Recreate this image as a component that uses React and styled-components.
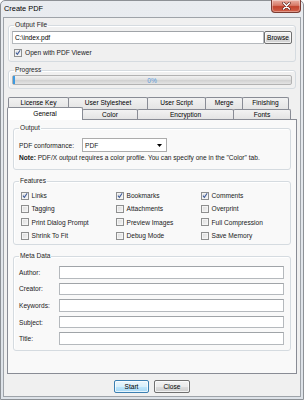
import React from "react";
import styled, { createGlobalStyle } from "styled-components";

const Global = createGlobalStyle`
  html, body { margin: 0; padding: 0; background: #ffffff; }
  body { font-family: "Liberation Sans", Arial, sans-serif; }
  * { box-sizing: border-box; }
`;

const Window = styled.div`
  width: 304px;
  height: 400px;
  display: flex;
  flex-direction: column;
  background: linear-gradient(#e9ecf0, #dde2e8);
  border: 1px solid #8d9196;
  border-radius: 5px 5px 0 0;
  font-family: "Liberation Sans", Arial, sans-serif;
  font-size: 6.6px;
  color: #1a1a1a;
`;

const TitleBar = styled.div`
  height: 16px;
  display: flex;
  align-items: flex-start;
  padding-left: 3px;
`;

const Title = styled.span`
  font-size: 7.4px;
  line-height: 15px;
  color: #000;
`;

const CloseBtn = styled.div`
  margin-left: auto;
  margin-right: 2px;
  margin-top: -1px;
  width: 30px;
  height: 13px;
  border: 1px solid #7a3c33;
  border-top: none;
  border-radius: 0 0 4px 4px;
  background: linear-gradient(#eab1a5 0%, #d77a68 45%, #c2432d 55%, #d2614a 100%);
  display: flex;
  align-items: center;
  justify-content: center;
  box-shadow: inset 0 0 0 1px rgba(255,255,255,0.35);
`;

const Client = styled.div`
  flex: 1;
  margin: 0 2px 2px 2px;
  border: 1px solid #9ea3a9;
  background: #f0f0f0;
  display: flex;
  flex-direction: column;
  padding: 3px 4px 3px 4px;
`;

const Group = styled.fieldset`
  margin: 0;
  height: ${(p) => p.$h}px;
  border: 1px solid #d5dbe0;
  border-radius: 3px;
  box-shadow: inset 1px 1px 0 #ffffff;
  padding: ${(p) => p.$pad || "0 3px"};
  min-width: 0;
`;

const Legend = styled.legend`
  font-size: 6.6px;
  line-height: 8px;
  padding: 0 1px;
  margin-left: 2px;
  color: #1e1e1e;
`;

const FileRow = styled.div`
  display: flex;
  margin-top: 2px;
  height: 13px;
`;

const TextInput = styled.div`
  flex: 1;
  height: ${(p) => p.$h || 13}px;
  background: #fff;
  border: 1px solid #b5b9bd;
  border-top-color: #a0a4a8;
  font-size: 6.6px;
  line-height: 11px;
  padding-left: 2px;
  color: #000;
`;

const Button = styled.div`
  width: ${(p) => p.$w}px;
  height: 13px;
  border: 1px solid ${(p) => (p.$def ? "#3c7fb1" : "#707070")};
  border-radius: 2px;
  background: ${(p) =>
    p.$def
      ? "linear-gradient(#eaf6fd 0%, #d9f0fc 50%, #bee6fd 51%, #a7d9f5 100%)"
      : "linear-gradient(#f2f2f2 0%, #ebebeb 50%, #dddddd 51%, #cfcfcf 100%)"};
  box-shadow: inset 0 0 0 1px rgba(255,255,255,0.7);
  font-size: 6.6px;
  line-height: 11px;
  text-align: center;
  color: #000;
`;

const CheckRow = styled.div`
  display: flex;
  align-items: center;
  gap: 3px;
  height: ${(p) => p.$h || 9}px;
  padding-left: ${(p) => p.$indent || 0}px;
  margin-top: ${(p) => p.$mt || 0}px;
  white-space: nowrap;
`;

const Box = styled.span`
  width: 8px;
  height: 8px;
  flex: none;
  border: 1px solid #8e8f8f;
  background: linear-gradient(135deg, #dadada, #f6f6f6);
  box-shadow: inset 0 0 0 1px #f4f4f4;
  display: flex;
  align-items: center;
  justify-content: center;
`;

const Progress = styled.div`
  margin-top: 1px;
  height: 10px;
  margin-left: 0;
  border: 1px solid #b2b2b2;
  border-radius: 2px;
  background: linear-gradient(#f1f1f1, #dedede 50%, #d0d0d0 51%, #e4e4e4);
  display: flex;
  align-items: center;
  justify-content: center;
  position: relative;
  font-size: 6.6px;
  color: #5a9bdc;
`;

const ProgressStart = styled.div`
  position: absolute;
  left: 0;
  top: 0;
  bottom: 0;
  width: 2px;
  background: #3c9ae0;
`;

const TabArea = styled.div`
  margin-top: 8px;
  margin-left: -1px;
  display: flex;
  flex-direction: column;
`;

const TabRow = styled.div`
  display: flex;
  margin: 0 2px;
  height: ${(p) => p.$h}px;
  position: relative;
  z-index: ${(p) => p.$z || 0};
`;

const Tab = styled.div`
  flex: 0 0 ${(p) => p.$w}px;
  border: 1px solid #898c95;
  border-bottom: none;
  margin-left: -1px;
  border-radius: 2px 2px 0 0;
  background: ${(p) => (p.$sel ? "#ffffff" : "linear-gradient(#f2f2f2, #e4e4e4)")};
  text-align: center;
  font-size: 6.6px;
  line-height: ${(p) => (p.$sel ? 11 : 10)}px;
  color: #000;
  white-space: nowrap;
  overflow: hidden;
  ${(p) =>
    p.$sel &&
    `
    margin-top: -2px;
    margin-left: -2px;
    height: 13px;
    position: relative;
    z-index: 2;
  `}
`;

const Panel = styled.div`
  height: 255px;
  margin-right: -1px;
  border: 1px solid #898c95;
  background: #f9f9f9;
  padding: 4px 5px 0 5px;
  display: flex;
  flex-direction: column;
  gap: 7px;
`;

const ConfRow = styled.div`
  display: flex;
  align-items: center;
  margin-top: 6px;
  padding-left: 2px;
  height: 14px;
`;

const ConfLabel = styled.span`
  width: 63px;
`;

const Select = styled.div`
  width: 85px;
  height: 14px;
  border: 1px solid #acacac;
  background: #ffffff;
  display: flex;
  align-items: center;
  padding-left: 2px;
  justify-content: space-between;
  padding-right: 4px;
`;

const Note = styled.div`
  margin-top: 2px;
  padding-left: 2px;
  line-height: 8px;
  white-space: nowrap;
  & b { font-weight: bold; }
`;

const FeatureGrid = styled.div`
  display: grid;
  grid-template-columns: 95px 85px 1fr;
  grid-auto-rows: 13.33px;
  align-items: center;
  margin-top: 4px;
  padding-left: 3.5px;
`;

const MetaGrid = styled.div`
  display: grid;
  grid-template-columns: 39.5px 1fr;
  grid-auto-rows: 12.5px;
  row-gap: 4.1px;
  align-items: center;
  margin-top: 6px;
  padding-left: 2px;
  padding-right: 3px;
`;

const ButtonRow = styled.div`
  margin-top: 6px;
  display: flex;
  justify-content: center;
  gap: 5px;
`;

const Check = () => (
  <svg width="7" height="7" viewBox="0 0 7 7">
    <path d="M1 3.6 L2.8 5.6 L6 0.8" fill="none" stroke="#3d5a98" strokeWidth="1.2" />
  </svg>
);

const CheckItem = ({ checked, label, ...rest }) => (
  <CheckRow {...rest}>
    <Box>{checked && <Check />}</Box>
    <span>{label}</span>
  </CheckRow>
);

const row1 = [
  ["License Key", 61],
  ["User Stylesheet", 80],
  ["User Script", 59],
  ["Merge", 38],
  ["Finishing", 47],
];
const row2 = [
  ["General", 76, true],
  ["Color", 56],
  ["Encryption", 97],
  ["Fonts", 58],
];

const features = [
  ["Links", true], ["Bookmarks", true], ["Comments", true],
  ["Tagging"], ["Attachments"], ["Overprint"],
  ["Print Dialog Prompt"], ["Preview Images"], ["Full Compression"],
  ["Shrink To Fit"], ["Debug Mode"], ["Save Memory"],
];

const meta = ["Author:", "Creator:", "Keywords:", "Subject:", "Title:"];

export default function App() {
  return (
    <>
      <Global />
      <Window>
        <TitleBar>
          <Title>Create PDF</Title>
          <CloseBtn>
            <svg width="9" height="8" viewBox="0 0 9 8">
              <path d="M1.5 1 L7.5 7 M7.5 1 L1.5 7" stroke="#5a1d14" strokeWidth="2.6" strokeLinecap="round" />
              <path d="M1.5 1 L7.5 7 M7.5 1 L1.5 7" stroke="#ffffff" strokeWidth="1.6" strokeLinecap="round" />
            </svg>
          </CloseBtn>
        </TitleBar>
        <Client>
          <Group $h={41}>
            <Legend>Output File</Legend>
            <FileRow>
              <TextInput>C:\index.pdf</TextInput>
              <Button $w={28}>Browse</Button>
            </FileRow>
            <CheckItem checked label="Open with PDF Viewer" $mt={4} $indent={2} />
          </Group>
          <Group $h={23} style={{ marginTop: 4 }} $pad="0 3px">
            <Legend>Progress</Legend>
            <Progress>
              <ProgressStart />
              0%
            </Progress>
          </Group>
          <TabArea>
            <TabRow $h={12}>
              {row1.map(([t, w]) => (
                <Tab key={t} $w={w}>{t}</Tab>
              ))}
            </TabRow>
            <TabRow $h={10} $z={1}>
              {row2.map(([t, w, s]) => (
                <Tab key={t} $w={w} $sel={s}>{t}</Tab>
              ))}
            </TabRow>
            <Panel>
              <Group $h={46}>
                <Legend>Output</Legend>
                <ConfRow>
                  <ConfLabel>PDF conformance:</ConfLabel>
                  <Select>
                    <span>PDF</span>
                    <svg width="5" height="3" viewBox="0 0 5 3">
                      <path d="M0 0 H5 L2.5 3 Z" fill="#000" />
                    </svg>
                  </Select>
                </ConfRow>
                <Note>
                  <b>Note:</b> PDF/X output requires a color profile. You can specify one in the "Color" tab.
                </Note>
              </Group>
              <Group $h={68}>
                <Legend>Features</Legend>
                <FeatureGrid>
                  {features.map(([l, c]) => (
                    <CheckItem key={l} label={l} checked={c} />
                  ))}
                </FeatureGrid>
              </Group>
              <Group $h={99}>
                <Legend>Meta Data</Legend>
                <MetaGrid>
                  {meta.map((m) => (
                    <React.Fragment key={m}>
                      <span>{m}</span>
                      <TextInput $h={12.5} />
                    </React.Fragment>
                  ))}
                </MetaGrid>
              </Group>
            </Panel>
          </TabArea>
          <ButtonRow>
            <Button $w={35} $def>Start</Button>
            <Button $w={36}>Close</Button>
          </ButtonRow>
        </Client>
      </Window>
    </>
  );
}
